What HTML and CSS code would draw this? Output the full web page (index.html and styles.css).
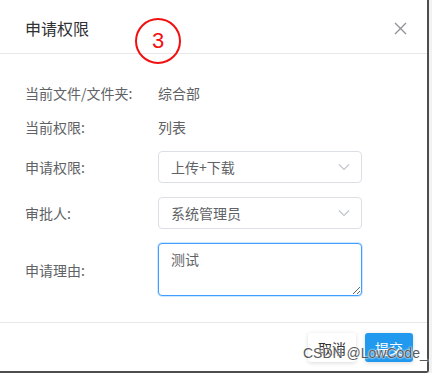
FILE: index.html
```html
<!DOCTYPE html>
<html lang="zh-CN">
  <head>
    <meta charset="UTF-8" />
    <title>申请权限</title>
    <link rel="stylesheet" href="styles.css">
  </head>
  <body>
    <div class="dialog">
      <div class="dialog-header">
        <span class="dialog-title">申请权限</span>
        <svg class="close" width="13" height="13" viewBox="0 0 13 13"><path d="M1 1 L12 12 M12 1 L1 12" stroke="#909399" stroke-width="1.4" fill="none"/></svg>
        <span class="mark">3</span>
      </div>

      <div class="dialog-body">
        <div class="row row-text">
          <label>当前文件/文件夹:</label>
          <span class="value">综合部</span>
        </div>
        <div class="row row-text row-second">
          <label>当前权限:</label>
          <span class="value">列表</span>
        </div>
        <div class="row row-field">
          <label>申请权限:</label>
          <div class="select">
            <span>上传+下载</span>
            <svg class="arrow" width="12" height="8" viewBox="0 0 12 8"><path d="M1 1.5 L6 6.5 L11 1.5" fill="none" stroke="#c0c4cc" stroke-width="1.1"/></svg>
          </div>
        </div>
        <div class="row row-field">
          <label>审批人:</label>
          <div class="select">
            <span>系统管理员</span>
            <svg class="arrow" width="12" height="8" viewBox="0 0 12 8"><path d="M1 1.5 L6 6.5 L11 1.5" fill="none" stroke="#c0c4cc" stroke-width="1.1"/></svg>
          </div>
        </div>
        <div class="row row-area">
          <label>申请理由:</label>
          <textarea class="reason">测试</textarea>
        </div>
      </div>

      <div class="dialog-footer">
        <button class="btn">取消</button>
        <button class="btn btn-primary">提交</button>
        <span class="watermark">CSDN @LowCode_</span>
      </div>
    </div>
  </body>
</html>
```

FILE: styles.css
```css
body {
  margin: 0;
  background-color: #f2f2f2;
  font-family: "Noto Sans CJK SC", "Liberation Sans", sans-serif;
}

.dialog {
  position: relative;
  width: 427px;
  height: 371px;
  background-color: #fff;
  border-right: 2px solid #4d4d4d;
  border-bottom: 2px solid #4d4d4d;
  border-bottom-right-radius: 3px;
}

.dialog-header {
  position: relative;
  height: 53px;
  display: flex;
  align-items: center;
  justify-content: space-between;
  padding: 0 20px 0 25px;
  border-bottom: 1px solid #e8e8e8;
}

.dialog-title {
  font-size: 16px;
  color: #303133;
  margin-top: 2px;
}

.close {
  margin-top: 3px;
}

.mark {
  position: absolute;
  left: 135px;
  top: 18px;
  width: 42px;
  height: 42px;
  border: 2px solid #f20f0f;
  border-radius: 50%;
  color: #f20f0f;
  font-family: "Liberation Sans", sans-serif;
  font-size: 22px;
  display: flex;
  align-items: center;
  justify-content: center;
}

.dialog-body {
  padding: 23px 0 26px 25px;
}

.row {
  display: flex;
  align-items: center;
  font-size: 14px;
  color: #606266;
}

.row label {
  width: 133px;
}

.row-text {
  height: 32px;
  margin-bottom: 2px;
}

.row-second {
  margin-bottom: 8px;
}

.row-field {
  margin-bottom: 14px;
}

.select {
  box-sizing: border-box;
  width: 204px;
  height: 32px;
  border: 1px solid #dcdfe6;
  border-radius: 4px;
  display: flex;
  align-items: center;
  justify-content: space-between;
  padding: 0 11px 0 12px;
}

.reason {
  box-sizing: border-box;
  width: 204px;
  height: 53px;
  margin: 0;
  border: 1px solid #409eff;
  border-radius: 4px;
  box-shadow: 0 0 0 1px rgba(64, 158, 255, 0.25);
  outline: none;
  padding: 5px 12px;
  font-family: "Noto Sans CJK SC", sans-serif;
  font-size: 14px;
  color: #606266;
}

.dialog-footer {
  position: relative;
  border-top: 1px solid #e8e8e8;
  padding: 10px 14px 0 0;
  display: flex;
  justify-content: flex-end;
  gap: 9px;
}

.btn {
  width: 48px;
  height: 29px;
  padding: 0;
  border: none;
  border-radius: 3px;
  background-color: #fff;
  box-shadow: 0 1px 4px rgba(0, 0, 0, 0.15);
  font-family: "Noto Sans CJK SC", sans-serif;
  font-size: 14px;
  color: #303133;
}

.btn-primary {
  background-color: #2199ee;
  color: #fff;
}

.watermark {
  position: absolute;
  left: 303px;
  top: 22px;
  white-space: nowrap;
  font-family: "Liberation Sans", sans-serif;
  font-size: 14px;
  color: #5a5a5a;
  text-shadow: 0 0 2px #fff, 0 0 2px #fff;
}
```
